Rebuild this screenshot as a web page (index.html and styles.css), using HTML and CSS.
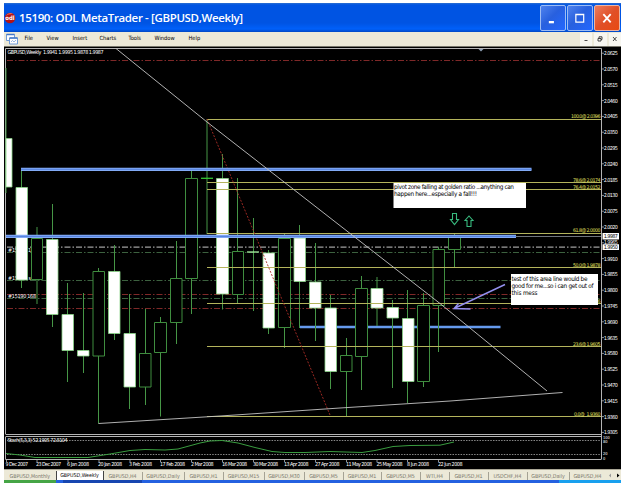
FILE: index.html
```html
<!DOCTYPE html>
<html lang="en">
<head>
  <meta charset="UTF-8" />
  <meta name="viewport" content="width=device-width, initial-scale=1" />
  <title>ODL MetaTrader</title>
  <link rel="stylesheet" href="styles.css">
</head>
<body>
  <div class="window">
    <header class="titlebar">
      <svg class="logo" viewBox="0 0 12 12">
        <circle cx="6" cy="6" r="5.3" fill="#b51316" />
        <path d="M1.5 4Q5-.5 9 2Q5 1.500 1.500 4" fill="#f06a58" />
        <text x="6" y="8.300" text-anchor="middle">odl</text>
      </svg>
      <h1>15190: ODL MetaTrader - [GBPUSD,Weekly]</h1>
      <div class="window-buttons">
        <button class="win-btn" aria-label="Minimize"><svg viewBox="0 0 26 26"><path d="M8.500 17.500h5.500" stroke-width="2.500" /></svg></button>
        <button class="win-btn" aria-label="Maximize"><svg viewBox="0 0 26 26"><path d="M8.500 9v8.500h8.500V9zM8.500 9.500h8.500" stroke-width="1.300" /></svg></button>
        <button class="win-btn close" aria-label="Close"><svg viewBox="0 0 26 26"><path d="M9 8.800l8 9M17 8.800l-8 9" stroke-width="2" /></svg></button>
      </div>
    </header>

    <nav class="menubar">
      <svg class="menu-icon" viewBox="0 0 12 12">
        <path d="M.5 1.500h8v6h-8z" fill="#fff" stroke="#6f9bd8" />
        <path d="M.5 1.500h8" stroke="#4478c8" stroke-width="1.500" />
        <path d="M3.500 5h8v6h-8z" fill="#fff" stroke="#6f9bd8" />
        <path d="M3.500 5h8" stroke="#4478c8" stroke-width="1.500" />
        <path d="M5 9l1.500-1.500L8 9l2-2" fill="none" stroke="#6f9bd8" stroke-width=".7" />
      </svg>
      <ul class="menu">
        <li>File</li>
        <li>View</li>
        <li>Insert</li>
        <li>Charts</li>
        <li>Tools</li>
        <li>Window</li>
        <li>Help</li>
      </ul>
      <div class="child-buttons">
        <span><svg viewBox="0 0 12 12"><path d="M4.500 7.500h3" /></svg></span>
        <span><svg viewBox="0 0 12 12"><path d="M4 5.500h3v2.500H4zM5 5V3.800h3v2.700H7" /></svg></span>
        <span><svg viewBox="0 0 12 12"><path d="M4 4l3.500 4M7.500 4L4 8" /></svg></span>
      </div>
    </nav>

    <main class="chart">
      <svg viewBox="4 46 617 423">
        <!-- frame -->
        <path class="frame" d="M5.500 434V48.500H601.500V459M5.500 434.500H601.500M5.500 437V459.500H601.500M5.500 436.500H601.500" />
        <path d="M478.500 49h5l-2.500 2.500z" fill="#8fa0b4" />

        <!-- order and pivot levels -->
        <path class="level red" d="M7 60.500H601M7 294.500H601M7 308.500H601" />
        <path class="level green" d="M7 252.500H601M7 280.500H601M7 298.500H601" />
        <path class="level white" d="M7 247.200H601" />
        <g class="order-text">
          <text x="8" y="252.300" textLength="23">#15190 1</text>
          <text x="8" y="279.500" textLength="23">#15190 s</text>
        </g>
        <path class="band thin" d="M300 327H500.500" />

        <!-- candles -->
        <path class="wick" d="M6 68V193M21.500 169V288M37 227V304M52.500 204V327M67.500 283V382M83.500 293V373M98.500 268V423.500M114.500 245V340M129.500 294V409M145.500 309V405M160.500 317V416.500M176.500 241V344M191.500 169V314M207 119V234M222.500 154V309.500M237.500 178V303M253.500 218V311M268.500 250V334M284.500 233V348M299.500 225V328M315.500 243V341M330.500 295V389M346.500 338V416M361.500 276V390M377 277V326M392.500 300V388M407.500 290V403M423.500 293V387M438.500 247V352M454.500 234V268" />
        <path class="bull" d="M31.500 238.500h11v41h-11zM93 271.500h11.500v84.500h-11.500zM139.500 353.500h11.500v33.500h-11.500zM154.500 322.500h12v30h-12zM170.500 278.500h11.500v44h-11.500zM185.500 178.500h12v100h-12zM232.500 251.500h11v43h-11zM278.500 238.500h12v89h-12zM340.500 355.500h11.500v16h-11.500zM355.500 288.500h12v68h-12zM417.500 305.500h12v76h-12zM433 249.500h11.500v56h-11.500zM448.500 236.500h12v13h-12z" />
        <path class="bear" d="M6 138.500h6v48.500h-6zM16 187.500h11.500v92.500h-11.500zM46.500 239.500h11.500v75h-11.500zM62 314.500h11.500v36h-11.500zM77.500 350.500h11.500v5.500h-11.500zM108.500 271.500h11.500v62h-11.500zM124 333.500h11.500v53.500h-11.500zM216.500 178.500h12v115.500h-12zM263 253h11.500v75h-11.500zM294 238h11.500v43.500h-11.500zM309.500 282h11.500v26h-11.500zM325 308h11.500v63.500h-11.500zM371 288.500h12v19.500h-12zM387 307.500h11.500v10.500h-11.500zM402.500 318.500h11.500v63h-11.500z" />
        <path class="doji" d="M201 178.300h12" />
        <path class="doji pale" d="M247 252h12" />

        <!-- fibonacci -->
        <path class="fib" d="M207 119.500H601M207 182.500H601M207 189.500H601M207 233.500H601M207 267.500H601M207 303.500H601M207 346.500H601M207 416.500H601" />
        <path d="M207 119L330 415" class="fib-base" />
        <g class="fib-text" text-anchor="end">
          <text x="600.500" y="118" textLength="29.500">100.0@ 2.0396</text>
          <text x="600.500" y="181.500" textLength="27.500">78.6@ 2.0174</text>
          <text x="600.500" y="188.500" textLength="27.500">76.4@ 2.0152</text>
          <text x="600.500" y="232.300" textLength="27.500">61.8@ 2.0000</text>
          <text x="600.500" y="267" textLength="27.500">50.0@ 1.9878</text>
          <text x="600.500" y="302.500" textLength="27.500">38.2@ 1.9756</text>
          <text x="600.500" y="345.800" textLength="27.500">23.6@ 1.9605</text>
          <text x="600.500" y="415.800" textLength="26.500">0.0@&#160; 1.9360</text>
        </g>

        <!-- resistance bands and bid line -->
        <path d="M516 236.500H601" stroke="#70757c" />
        <path class="band" d="M21 169.300H531.500M6 236.400H516" />
        <path class="band-core" d="M21 169.300H531.500M6 236.400H516" />

        <!-- trend lines -->
        <path class="trend" d="M116 48.500L207 122L440 303.500L547 391M98.500 423.500L220 416L340 408L450 401L562.500 392.500" />

        <text class="small" x="8" y="298.300" textLength="28">#15190 168</text>
        <text class="small" x="7.500" y="54.300" textLength="96" xml:space="preserve">GBPUSD,Weekly  1.9941 1.9995 1.9878 1.9987</text>

        <!-- arrows -->
        <path class="signal" d="M452.500 213.500h4v6h2l-4 5l-4-5h2zM467 226.500v-6h-2l4-4.500l4 4.500h-2v6z" />
        <path class="pointer" d="M505 284.500L454 308.500M458.500 303.500L454 308.500L470.500 309" />

        <!-- notes -->
        <rect x="393.500" y="183" width="132.500" height="25" fill="#fff" />
        <text class="note" x="394" y="189" textLength="120">pivot zone falling at golden ratio ...anything can</text>
        <text class="note" x="394" y="196.300" textLength="83">happen here...especially a fall!!!</text>
        <rect x="511" y="274" width="87" height="31" fill="#fff" />
        <text class="note" x="511.500" y="280.500" textLength="76">test of this area line would be</text>
        <text class="note" x="511.500" y="287.700" textLength="82">good for me...so i can get out of</text>
        <text class="note" x="511.500" y="295" textLength="26">this mess</text>

        <!-- stochastic -->
        <path class="stoch-level" d="M7 440.500H601M7 454.500H601" />
        <path class="stoch" d="M6 453.500L20 455L35 457.500H88L110 454L130 450.500L145 449.500L165 450L178 449L200 443L210 441L222 440.500L238 443L255 447.500L272 451.500L285 452.500H305L330 451.500L362 452.500L375 450.500L393 446.500L410 445.500L440 445.200L454 442" />
        <text class="small" x="7.500" y="442" textLength="60">Stoch(5,3,3) 52.1905 72.8104</text>

        <!-- price scale -->
        <path class="ticks" d="M602 53.200h2M602 69h2M602 84.800h2M602 100.600h2M602 116.400h2M602 132.200h2M602 148h2M602 163.800h2M602 179.600h2M602 195.400h2M602 211.200h2M602 227h2M602 242.800h2M602 258.600h2M602 274.400h2M602 290.200h2M602 306h2M602 321.800h2M602 337.600h2M602 353.400h2M602 369.200h2M602 385h2M602 400.800h2M602 416.600h2M602 432.400h2" />
        <g class="small">
          <text x="603.800" y="55.200" textLength="14">2.0625</text>
          <text x="603.800" y="71" textLength="14">2.0570</text>
          <text x="603.800" y="86.800" textLength="14">2.0515</text>
          <text x="603.800" y="102.600" textLength="14">2.0460</text>
          <text x="603.800" y="118.400" textLength="14">2.0405</text>
          <text x="603.800" y="134.200" textLength="14">2.0350</text>
          <text x="603.800" y="150" textLength="14">2.0295</text>
          <text x="603.800" y="165.800" textLength="14">2.0240</text>
          <text x="603.800" y="181.600" textLength="14">2.0185</text>
          <text x="603.800" y="197.400" textLength="14">2.0130</text>
          <text x="603.800" y="213.200" textLength="14">2.0075</text>
          <text x="603.800" y="229" textLength="14">2.0020</text>
          <text x="603.800" y="244.100" textLength="14">1.9965</text>
          <text x="603.800" y="260.600" textLength="14">1.9910</text>
          <text x="603.800" y="276.400" textLength="14">1.9855</text>
          <text x="603.800" y="292.200" textLength="14">1.9800</text>
          <text x="603.800" y="308" textLength="14">1.9745</text>
          <text x="603.800" y="323.800" textLength="14">1.9690</text>
          <text x="603.800" y="339.600" textLength="14">1.9635</text>
          <text x="603.800" y="355.400" textLength="14">1.9580</text>
          <text x="603.800" y="371.200" textLength="14">1.9525</text>
          <text x="603.800" y="387" textLength="14">1.9470</text>
          <text x="603.800" y="402.800" textLength="14">1.9415</text>
          <text x="603.800" y="418.600" textLength="14">1.9360</text>
          <text x="603.800" y="434.200" textLength="14">1.9305</text>
        </g>
        <g class="small stoch-scale">
          <text x="603" y="438.800">100</text>
          <text x="603" y="443.300">80</text>
          <text x="603" y="455">20</text>
          <text x="603" y="459.500">0</text>
        </g>
        <path d="M602.500 233h16.500v6.500h-16.500zM602.500 244.300h16.500v5.700h-16.500z" fill="#fff" />
        <text class="small tag" x="603.800" y="238.300" textLength="14">1.9987</text>
        <text class="small tag" x="603.800" y="249.300" textLength="14">1.9950</text>

        <!-- time scale -->
        <path class="ticks" d="M6.500 460v2M37 460v2M68 460v2M99 460v2M130 460v2M160.500 460v2M191.500 460v2M222.500 460v2M253.500 460v2M284.500 460v2M315.500 460v2M346.500 460v2M377 460v2M407.500 460v2M438.500 460v2" />
        <g class="small">
          <text x="5.500" y="466.200" textLength="22.500">9 Dec 2007</text>
          <text x="36" y="466.200" textLength="25">23 Dec 2007</text>
          <text x="67" y="466.200" textLength="22">6 Jan 2008</text>
          <text x="98" y="466.200" textLength="24">20 Jan 2008</text>
          <text x="129" y="466.200" textLength="23">3 Feb 2008</text>
          <text x="160" y="466.200" textLength="25">17 Feb 2008</text>
          <text x="191" y="466.200" textLength="22.500">2 Mar 2008</text>
          <text x="222" y="466.200" textLength="25">16 Mar 2008</text>
          <text x="253" y="466.200" textLength="25">30 Mar 2008</text>
          <text x="284" y="466.200" textLength="24.500">13 Apr 2008</text>
          <text x="315" y="466.200" textLength="24.500">27 Apr 2008</text>
          <text x="346" y="466.200" textLength="26">11 May 2008</text>
          <text x="376.500" y="466.200" textLength="26">25 May 2008</text>
          <text x="407" y="466.200" textLength="22">8 Jun 2008</text>
          <text x="438" y="466.200" textLength="24.500">22 Jun 2008</text>
        </g>
      </svg>
    </main>

    <div class="tabs">
      <span>GBPUSD,Monthly</span>
      <span class="active">GBPUSD,Weekly</span>
      <span>GBPUSD,H4</span>
      <span>GBPUSD,Daily</span>
      <span>GBPUSD,H1</span>
      <span>GBPUSD,M15</span>
      <span>GBPUSD,M30</span>
      <span>GBPUSD,M5</span>
      <span>GBPUSD,M1</span>
      <span>GBPUSD,M5</span>
      <span>WTI,H4</span>
      <span>GBPUSD,H1</span>
      <span>USDCHF,H4</span>
      <span>GBPUSD,Daily</span>
      <span>GBPUSD,H4</span>
      <svg viewBox="0 0 8 11"><path d="M5 3.500v4L3 5.500z" fill="#999" /></svg>
      <svg viewBox="0 0 8 11"><path d="M3 3.500v4l2.500-2z" fill="#000" /></svg>
    </div>
    <div class="taskbar">
      <div class="start"></div>
      <div class="task"></div>
      <div class="tray"></div>
    </div>
  </div>
</body>
</html>
```
FILE: styles.css
```css
/* Global Styles */
* {
  box-sizing: border-box;
}
body {
  margin: 0;
  padding: 3px 4px 0;
  height: 483px;
  overflow: hidden;
  background-color: #fff;
  font-family: "DejaVu Sans Condensed", "DejaVu Sans", sans-serif;
}
svg {
  display: block;
}
.window {
  display: flex;
  flex-direction: column;
  width: 617px;
  height: 480px;
}

/* Title Bar */
.titlebar {
  display: flex;
  align-items: center;
  height: 29px;
  padding-right: 1px;
  background: linear-gradient(#2b6fd0 0, #0054e3 2px, #0054e3 20px, #0060fa 26px, #0148c4 29px);
}
.logo {
  width: 12px;
  height: 12px;
}
.logo text {
  font-size: 6px;
  font-weight: bold;
  fill: #fff;
}
.titlebar h1 {
  flex: 1;
  margin: 0 0 0 3px;
  color: #fff;
  font-family: "Open Sans", sans-serif;
  font-size: 11.5px;
  font-weight: 600;
  letter-spacing: -0.36px;
  white-space: nowrap;
}
.window-buttons {
  display: flex;
  gap: 1px;
}
.win-btn {
  width: 26px;
  height: 26px;
  padding: 0;
  border: 1px solid #9dbcf4;
  border-radius: 2px;
  background: linear-gradient(135deg, #4f82ed, #2860de 45%, #2367ff);
}
.win-btn.close {
  border-color: #eab5a4;
  background: linear-gradient(135deg, #ed7c5c, #e05028 50%, #e94a12);
}
.win-btn svg {
  width: 24px;
  height: 24px;
  fill: none;
  stroke: #fff;
}

/* Menu */
.menubar {
  display: flex;
  align-items: center;
  height: 14px;
  padding-left: 2px;
  background-color: #ece9d8;
  font-size: 5.7px;
}
.menu-icon {
  width: 12px;
  height: 12px;
}
.menu {
  display: grid;
  grid-template-columns: 22px 26px 27px 29px 26px 34px 20px;
  flex: 1;
  margin: 0;
  padding: 0 0 2px 6.5px;
  list-style: none;
}
.child-buttons {
  display: flex;
  gap: 2px;
}
.child-buttons span {
  width: 12.5px;
  height: 13px;
  background-color: #f7f6f0;
}
.child-buttons svg {
  width: 12px;
  height: 12px;
  fill: none;
  stroke: #333;
  stroke-width: 0.9;
}

/* Chart */
.chart {
  height: 423px;
  background-color: #000;
  border-top: 1px solid #77766c;
}
.chart svg {
  width: 617px;
  height: 423px;
  margin-top: -1px;
}
.frame {
  fill: none;
  stroke: #b4b4b4;
  stroke-width: 1;
}
.level {
  stroke-width: 0.8;
  stroke-dasharray: 6 2 1.5 2;
}
.level.red {
  stroke: #a03232;
}
.level.green {
  stroke: #4b7a4f;
}
.level.white {
  stroke: #a0a0a0;
  stroke-width: 1.2;
}
.band {
  stroke: #82aaf5;
  stroke-width: 3.2;
}
.band.thin {
  stroke: #659aee;
  stroke-width: 2.4;
}
.band-core {
  stroke: #527fdd;
  stroke-width: 1;
}
.wick {
  stroke: #469646;
  stroke-width: 1;
}
.bull {
  fill: #000;
  stroke: #3f8d3f;
  stroke-width: 1;
}
.bear {
  fill: #fff;
  stroke: #8ad488;
  stroke-width: 0.8;
}
.doji {
  stroke: #35c935;
  stroke-width: 1.3;
}
.doji.pale {
  stroke: #a8f0a0;
}
.fib {
  stroke: #b4b45c;
  stroke-width: 1;
}
.fib-base {
  stroke: #aa2d26;
  stroke-width: 0.9;
  stroke-dasharray: 2 1.5;
}
.fib-text {
  fill: #e0e060;
  font-size: 5.2px;
}
.trend {
  fill: none;
  stroke: #c4c4c4;
  stroke-width: 0.9;
}
.small,
.order-text {
  fill: #fff;
  font-size: 5.4px;
}
.stoch-scale {
  font-size: 4px;
}
.small.tag {
  fill: #000;
}
.note {
  fill: #000;
  font-size: 6.4px;
}
.signal {
  fill: #000;
  stroke: #38b97e;
  stroke-width: 1.1;
}
.pointer {
  fill: none;
  stroke: #9490ee;
  stroke-width: 1.4;
}
.stoch {
  fill: none;
  stroke: #3a9d40;
  stroke-width: 1;
}
.stoch-level {
  stroke: #aaa;
  stroke-width: 0.8;
  stroke-dasharray: 1.5 1.2;
}
.ticks {
  stroke: #b4b4b4;
  stroke-width: 0.8;
}

/* Tabs */
.tabs {
  display: grid;
  grid-template-columns: 51.5px 48px 39px 42px 39px 41px 40px 39px 38px 39px 29px 39px 39px 42px 36px 8px 7px;
  align-items: center;
  height: 11px;
  border-top: 1px solid #aaa797;
  background-color: #ece9d8;
  color: #77756a;
  font-size: 5.3px;
  line-height: 8px;
  text-align: center;
  white-space: nowrap;
}
.tabs span {
  border-right: 1px solid #a5a294;
}
.tabs span:first-child,
.tabs span:nth-child(15) {
  border-right: none;
}
.tabs .active {
  height: 10px;
  border: 1px solid #444;
  border-top: none;
  background-color: #fff;
  color: #000;
}
.tabs svg {
  width: 8px;
  height: 11px;
}

/* Taskbar */
.taskbar {
  display: flex;
  flex: 1;
  background-color: #2461e0;
}
.start {
  width: 52px;
  background-color: #46a546;
}
.task {
  width: 79px;
  margin-left: 7px;
  background-color: #1746b0;
}
.tray {
  width: 62px;
  margin-left: auto;
  background-color: #18a0ee;
}
```
